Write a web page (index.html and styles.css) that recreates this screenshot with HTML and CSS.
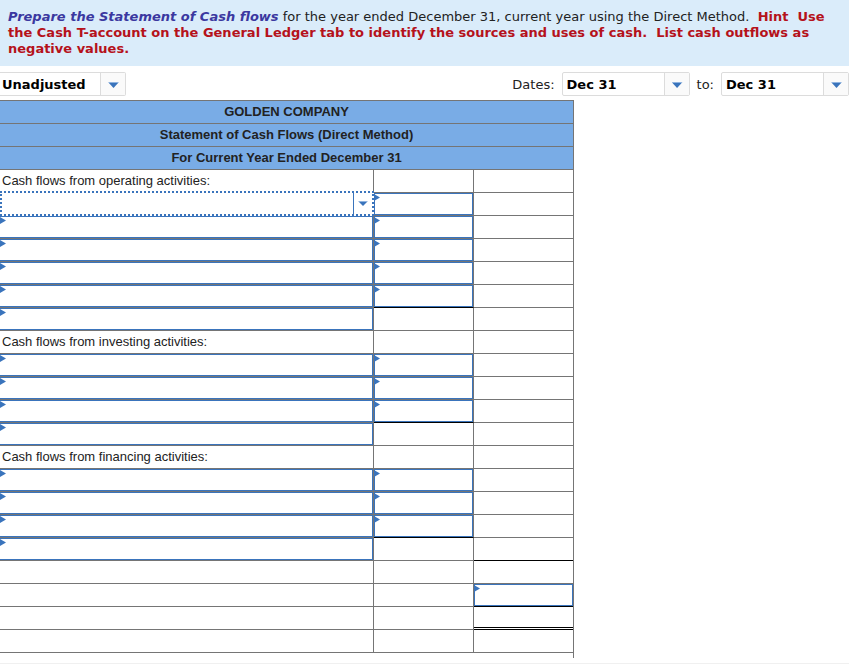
FILE: index.html
```
<!DOCTYPE html>
<html lang="en">
<head>
  <meta charset="UTF-8">
  <meta name="viewport" content="width=device-width, initial-scale=1.0">
  <title>Statement of Cash Flows</title>
  <link rel="stylesheet" href="styles.css">
</head>
<body>
  <div class="page">
    <p class="instructions"><em>Prepare the Statement of Cash flows</em> for the year ended December 31, current year using the Direct Method.&nbsp; <strong>Hint&nbsp; Use the Cash T-account on the General Ledger tab to identify the sources and uses of cash.&nbsp; List cash outflows as negative values.</strong></p>

    <form class="toolbar">
      <span class="dropdown balance">
        <select aria-label="Trial balance"><option>Unadjusted</option></select>
      </span>
      <label for="date-from">Dates:</label>
      <span class="dropdown">
        <select id="date-from"><option>Dec 31</option></select>
      </span>
      <label for="date-to">to:</label>
      <span class="dropdown">
        <select id="date-to"><option>Dec 31</option></select>
      </span>
    </form>

    <div class="sheet">
      <table>
        <colgroup>
          <col class="col-account">
          <col class="col-amount">
          <col class="col-total">
        </colgroup>
        <thead>
          <tr><th colspan="3">GOLDEN COMPANY</th></tr>
          <tr><th colspan="3">Statement of Cash Flows (Direct Method)</th></tr>
          <tr><th colspan="3">For Current Year Ended December 31</th></tr>
        </thead>
        <tbody>
          <tr><td>Cash flows from operating activities:</td><td></td><td></td></tr>
          <tr>
            <td class="active"><select aria-label="Operating item 1"><option></option></select></td>
            <td class="entry"><input type="text" aria-label="Operating amount 1"></td>
            <td></td>
          </tr>
          <tr>
            <td class="entry"><select aria-label="Operating item 2"><option></option></select></td>
            <td class="entry"><input type="text" aria-label="Operating amount 2"></td>
            <td></td>
          </tr>
          <tr>
            <td class="entry"><select aria-label="Operating item 3"><option></option></select></td>
            <td class="entry"><input type="text" aria-label="Operating amount 3"></td>
            <td></td>
          </tr>
          <tr>
            <td class="entry"><select aria-label="Operating item 4"><option></option></select></td>
            <td class="entry"><input type="text" aria-label="Operating amount 4"></td>
            <td></td>
          </tr>
          <tr>
            <td class="entry"><select aria-label="Operating item 5"><option></option></select></td>
            <td class="entry subtotal"><input type="text" aria-label="Operating amount 5"></td>
            <td></td>
          </tr>
          <tr>
            <td class="entry"><select aria-label="Operating total"><option></option></select></td>
            <td></td>
            <td></td>
          </tr>
          <tr><td>Cash flows from investing activities:</td><td></td><td></td></tr>
          <tr>
            <td class="entry"><select aria-label="Investing item 1"><option></option></select></td>
            <td class="entry"><input type="text" aria-label="Investing amount 1"></td>
            <td></td>
          </tr>
          <tr>
            <td class="entry"><select aria-label="Investing item 2"><option></option></select></td>
            <td class="entry"><input type="text" aria-label="Investing amount 2"></td>
            <td></td>
          </tr>
          <tr>
            <td class="entry"><select aria-label="Investing item 3"><option></option></select></td>
            <td class="entry subtotal"><input type="text" aria-label="Investing amount 3"></td>
            <td></td>
          </tr>
          <tr>
            <td class="entry"><select aria-label="Investing total"><option></option></select></td>
            <td></td>
            <td></td>
          </tr>
          <tr><td>Cash flows from financing activities:</td><td></td><td></td></tr>
          <tr>
            <td class="entry"><select aria-label="Financing item 1"><option></option></select></td>
            <td class="entry"><input type="text" aria-label="Financing amount 1"></td>
            <td></td>
          </tr>
          <tr>
            <td class="entry"><select aria-label="Financing item 2"><option></option></select></td>
            <td class="entry"><input type="text" aria-label="Financing amount 2"></td>
            <td></td>
          </tr>
          <tr>
            <td class="entry"><select aria-label="Financing item 3"><option></option></select></td>
            <td class="entry subtotal"><input type="text" aria-label="Financing amount 3"></td>
            <td></td>
          </tr>
          <tr>
            <td class="entry"><select aria-label="Financing total"><option></option></select></td>
            <td></td>
            <td class="subtotal"></td>
          </tr>
          <tr><td></td><td></td><td></td></tr>
          <tr>
            <td></td>
            <td></td>
            <td class="entry subtotal"><input type="text" aria-label="Beginning cash balance"></td>
          </tr>
          <tr><td></td><td></td><td class="total"></td></tr>
          <tr><td></td><td></td><td></td></tr>
        </tbody>
      </table>
    </div>
  </div>
</body>
</html>
```
FILE: styles.css
```
* {
  box-sizing: border-box;
}
body {
  margin: 0;
  background: #fff;
  color: #222;
  font-family: Verdana, "DejaVu Sans", sans-serif;
  font-size: 13px;
}
.page {
  margin-right: 5px;
  border-bottom: 1px solid #f0f0f0;
  padding-bottom: 5px;
}
.instructions {
  margin: 0;
  padding: 9px 8px;
  background: #daecfa;
  line-height: 16px;
}
.instructions em {
  color: #3b38a0;
  font-weight: bold;
}
.instructions strong {
  color: #b5121b;
}

/* period and balance pickers */
.toolbar {
  display: flex;
  align-items: center;
  padding: 6px 0 4px;
}
.toolbar label {
  margin: 0 7px;
}
.dropdown {
  position: relative;
  width: 128px;
}
.balance {
  width: 126px;
  margin-right: auto;
}
.dropdown select {
  display: block;
  appearance: none;
  width: 100%;
  height: 24px;
  padding: 0 28px 0 4px;
  border: 1px solid #dcdcdc;
  border-radius: 2px;
  background: #fff;
  color: #000;
  font: bold 13px Verdana, "DejaVu Sans", sans-serif;
}
.balance select {
  padding-left: 2px;
  border-left: 0;
  border-radius: 0 2px 2px 0;
}
.dropdown::before {
  content: "";
  position: absolute;
  top: 1px;
  right: 1px;
  bottom: 1px;
  width: 24px;
  border-left: 1px solid #dcdcdc;
  background: #fafafa;
  pointer-events: none;
}
.dropdown::after,
.active::after {
  content: "";
  position: absolute;
  top: 10px;
  right: 7px;
  width: 11px;
  height: 6px;
  background: linear-gradient(#8fb3df 1px, #3a74bc 1px);
  clip-path: polygon(0 0, 100% 0, 50% 100%);
  pointer-events: none;
}

/* statement */
.sheet {
  width: fit-content;
  padding-bottom: 5px;
  border-right: 1px solid #757575;
}
table {
  table-layout: fixed;
  width: 573px;
  border-collapse: separate;
  border-spacing: 0;
  border-top: 1px solid #757575;
  font-family: Arial, "Liberation Sans", sans-serif;
  font-size: 13px;
  line-height: 16px;
}
.col-account {
  width: 374px;
}
.col-amount {
  width: 100px;
}
.col-total {
  width: 99px;
}
th,
td {
  position: relative;
  height: 23px;
  padding: 0 2px;
  border-bottom: 1px solid #757575;
  text-align: left;
}
th {
  background: #79ace6;
  text-align: center;
}
td + td,
td:first-child {
  border-right: 1px solid #757575;
}
td:last-child {
  border-right: 0;
}
.entry,
.active {
  padding: 0;
}
.entry input,
.entry select,
.active select {
  display: block;
  appearance: none;
  width: 100%;
  height: 22px;
  padding: 0 8px;
  border: 1px solid #3a74bc;
  border-radius: 0;
  background: #fff;
  font: inherit;
}
.entry select {
  border-left: 0;
}
.entry::before {
  content: "";
  position: absolute;
  top: 1px;
  left: 0;
  width: 6px;
  height: 7px;
  background: #3a74bc;
  clip-path: polygon(0 0, 100% 50%, 0 100%);
  pointer-events: none;
}

/* currently selected cell */
.active {
  z-index: 1;
}
.active::before {
  content: "";
  position: absolute;
  top: -2px;
  right: -1px;
  bottom: -1px;
  left: 0;
  border: 2px dotted #3a74bc;
  background: #fff;
}
.active select {
  position: relative;
  width: 354px;
  border-width: 0 1px 0 0;
  background: transparent;
}
.active::after {
  top: 8px;
  right: 5px;
  width: 10px;
  height: 5px;
}
.subtotal {
  border-bottom-color: #000;
}
.total {
  border-bottom: 3px double #000;
}
```
